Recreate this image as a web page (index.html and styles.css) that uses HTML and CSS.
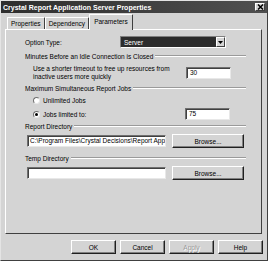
FILE: index.html
```html
<!DOCTYPE html>
<html lang="en">
<head>
    <meta charset="UTF-8">
    <title>Crystal Report Application Server Properties</title>
    <link rel="stylesheet" href="styles.css">
</head>
<body>
    <div class="window">
        <div class="titlebar">
            <span class="title">Crystal Report Application Server Properties</span>
            <span class="close">
                <svg width="7" height="6" viewBox="0 0 7 6"><path d="M1 0.5 L6 5.5 M6 0.5 L1 5.5" stroke="#000" stroke-width="1.5"/></svg>
            </span>
        </div>

        <div class="tabs">
            <div class="tab">Properties</div>
            <div class="tab">Dependency</div>
            <div class="tab active">Parameters</div>
        </div>

        <div class="panel">
            <div class="row option-row">
                <span class="label">Option Type:</span>
                <div class="combo">
                    <span class="combo-value">Server</span>
                    <span class="combo-btn">
                        <svg width="5" height="3" viewBox="0 0 5 3"><path d="M0 0 H5 L2.5 3 Z" fill="#000"/></svg>
                    </span>
                </div>
            </div>

            <div class="group g-idle"><span>Minutes Before an Idle Connection is Closed</span><i></i></div>
            <div class="row desc-row">
                <span class="desc">Use a shorter timeout to free up resources from<br>inactive users more quickly</span>
                <div class="field small">30</div>
            </div>

            <div class="group g-jobs"><span>Maximum Simultaneous Report Jobs</span><i></i></div>
            <div class="row radio-row r-first">
                <span class="radio"></span><span>Unlimited Jobs</span>
            </div>
            <div class="row radio-row r-second">
                <span class="radio checked"></span><span>Jobs limited to:</span>
                <div class="field small">75</div>
            </div>

            <div class="group g-report"><span>Report Directory</span><i></i></div>
            <div class="row dir-row">
                <div class="field wide">C:\Program Files\Crystal Decisions\Report Appl</div>
                <div class="btn browse">Browse...</div>
            </div>

            <div class="group g-temp"><span>Temp Directory</span><i></i></div>
            <div class="row dir-row">
                <div class="field wide"></div>
                <div class="btn browse">Browse...</div>
            </div>
        </div>

        <div class="footer">
            <div class="btn">OK</div>
            <div class="btn">Cancel</div>
            <div class="btn disabled">Apply</div>
            <div class="btn">Help</div>
        </div>
    </div>
</body>
</html>
```

FILE: styles.css
```css
body {
    margin: 0;
    padding: 0;
    background-color: #d4d4d4;
    font-family: "Liberation Sans", Arial, sans-serif;
    font-size: 6.5px;
    color: #000;
}
.window {
    width: 268px;
    height: 261px;
    box-sizing: border-box;
    background-color: #d4d4d4;
    border-top: 1px solid #e4e4e4;
    border-left: 1px solid #e4e4e4;
    border-right: 1px solid #404040;
    border-bottom: 1px solid #404040;
}
.titlebar {
    height: 12px;
    background: linear-gradient(to right, #2e2e2e, #505050);
    display: flex;
    align-items: center;
    justify-content: space-between;
    padding: 0 2px 0 2px;
}
.title {
    color: #fff;
    font-weight: bold;
    font-size: 7px;
}
.close {
    width: 10px;
    height: 8px;
    background-color: #d4d4d4;
    border-top: 1px solid #fff;
    border-left: 1px solid #fff;
    border-right: 1px solid #404040;
    border-bottom: 1px solid #404040;
    box-sizing: border-box;
    display: flex;
    align-items: center;
    justify-content: center;
}
.tabs {
    display: flex;
    align-items: flex-end;
    height: 16px;
    padding-left: 6px;
    position: relative;
    z-index: 1;
}
.tab {
    height: 12px;
    line-height: 11px;
    padding: 0 3px;
    border-top: 1px solid #fff;
    border-left: 1px solid #fff;
    border-right: 1px solid #404040;
    box-sizing: border-box;
    border-radius: 1px 1px 0 0;
}
.tab.active {
    height: 16px;
    line-height: 13px;
    padding: 0 4px;
    margin-bottom: -1px;
    background-color: #d4d4d4;
}
.panel {
    margin-left: 4px;
    width: 257px;
    height: 205px;
    box-sizing: border-box;
    border-top: 1px solid #fff;
    border-left: 1px solid #fff;
    border-right: 1px solid #404040;
    border-bottom: 1px solid #404040;
    padding: 0 15px 0 19px;
    display: flex;
    flex-direction: column;
}
.row {
    display: flex;
    align-items: center;
}
.option-row {
    margin-top: 6px;
    height: 12px;
}
.label {
    width: 95px;
}
.combo {
    width: 106px;
    height: 12px;
    box-sizing: border-box;
    border-top: 1px solid #808080;
    border-left: 1px solid #808080;
    border-right: 1px solid #fff;
    border-bottom: 1px solid #fff;
    background-color: #2c2c2c;
    display: flex;
    align-items: center;
    padding-left: 3px;
}
.combo-value {
    color: #fff;
    flex: 1;
}
.combo-btn {
    width: 9px;
    height: 10px;
    box-sizing: border-box;
    background-color: #d4d4d4;
    border-top: 1px solid #fff;
    border-left: 1px solid #fff;
    border-right: 1px solid #404040;
    border-bottom: 1px solid #404040;
    display: flex;
    align-items: center;
    justify-content: center;
}
.group {
    display: flex;
    align-items: center;
    height: 8px;
}
.group i {
    flex: 1;
    margin-left: 2px;
    height: 0;
    border-top: 1px solid #9a9a9a;
    border-bottom: 1px solid #fff;
}
.g-idle {
    margin-top: 4px;
}
.g-jobs {
    margin-top: 3px;
}
.g-report {
    margin-top: 2px;
}
.g-temp {
    margin-top: 6px;
}
.desc-row {
    margin-top: 5px;
    align-items: flex-start;
    padding-left: 8px;
}
.desc {
    line-height: 8px;
    width: 153px;
}
.desc-row .field {
    margin-top: 2px;
}
.field {
    height: 12px;
    box-sizing: border-box;
    background-color: #fff;
    border-top: 1px solid #707070;
    border-left: 1px solid #707070;
    border-right: 1px solid #e8e8e8;
    border-bottom: 1px solid #e8e8e8;
    box-shadow: inset 1px 1px 0 #404040;
    padding-left: 3px;
    line-height: 10px;
    white-space: nowrap;
    overflow: hidden;
}
.field.small {
    width: 45px;
}
.field.wide {
    width: 139px;
    padding-left: 2px;
}
.radio-row {
    padding-left: 8px;
}
.r-first {
    margin-top: 4px;
    height: 8px;
}
.r-second {
    margin-top: 4px;
    height: 12px;
}
.r-second .field {
    margin-left: auto;
    margin-right: 16px;
}
.radio {
    width: 7px;
    height: 7px;
    box-sizing: border-box;
    border-radius: 50%;
    background-color: #fff;
    border-top: 1px solid #707070;
    border-left: 1px solid #707070;
    border-right: 1px solid #e8e8e8;
    border-bottom: 1px solid #e8e8e8;
    margin-right: 3px;
    display: flex;
    align-items: center;
    justify-content: center;
}
.radio.checked::after {
    content: "";
    width: 3px;
    height: 3px;
    border-radius: 50%;
    background-color: #000;
}
.dir-row {
    margin-top: 4px;
    height: 14px;
    gap: 6px;
    padding-left: 2px;
}
.btn {
    height: 14px;
    box-sizing: border-box;
    background-color: #d4d4d4;
    border-top: 1px solid #fff;
    border-left: 1px solid #fff;
    border-right: 1px solid #202020;
    border-bottom: 1px solid #202020;
    box-shadow: inset -1px -1px 0 #808080;
    display: flex;
    align-items: center;
    justify-content: center;
}
.btn.browse {
    width: 72px;
}
.btn.disabled {
    color: #9a9a9a;
    text-shadow: 1px 1px 0 #fff;
}
.footer {
    display: flex;
    justify-content: flex-end;
    gap: 4px;
    margin-top: 6px;
    padding-right: 4px;
}
.footer .btn {
    width: 45px;
}
```
